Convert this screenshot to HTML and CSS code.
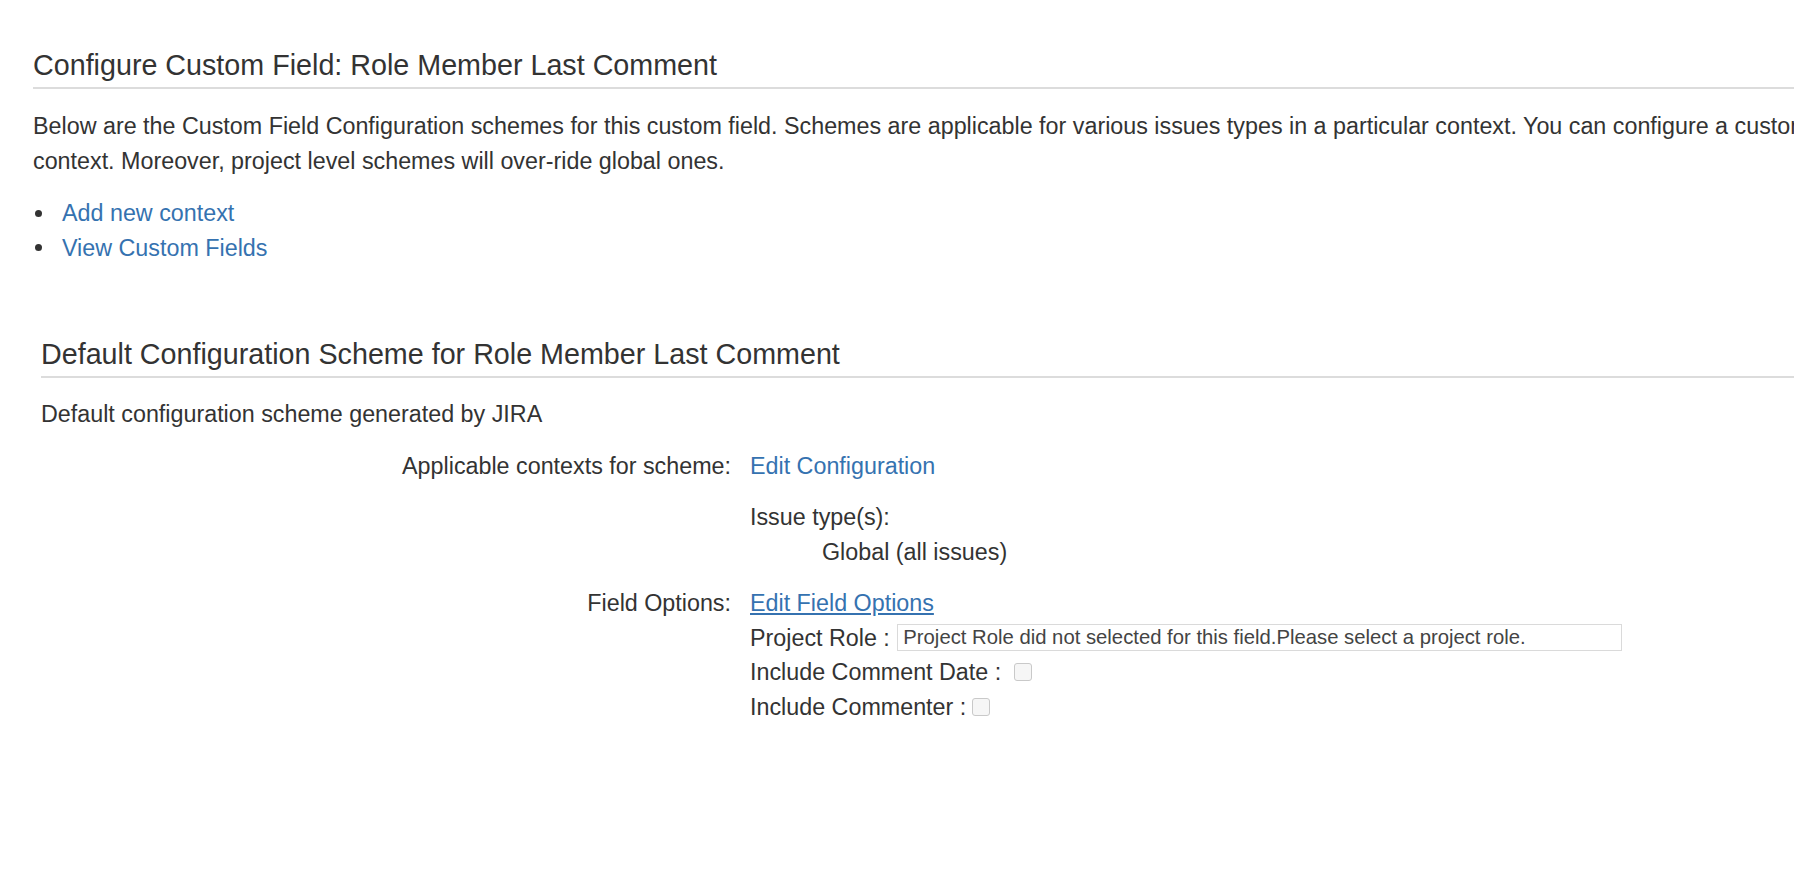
FILE: index.html
```html
<!DOCTYPE html>
<html lang="en">
<head>
<meta charset="utf-8" />
<link rel="stylesheet" href="styles.css">
</head>
<body>
  <div class="page">
    <h1 class="title">Configure Custom Field: Role Member Last Comment</h1>
    <p class="intro">Below are the Custom Field Configuration schemes for this custom field. Schemes are applicable for various issues types in a particular context. You can configure a custom field differently for each<br>context. Moreover, project level schemes will over-ride global ones.</p>
    <ul class="actions">
      <li><a href="#">Add new context</a></li>
      <li><a href="#">View Custom Fields</a></li>
    </ul>

    <div class="scheme">
      <h2 class="title">Default Configuration Scheme for Role Member Last Comment</h2>
      <p class="scheme-desc">Default configuration scheme generated by JIRA</p>

      <div class="props">
        <div class="prop-label">Applicable contexts for scheme:</div>
        <div class="prop-value">
          <a href="#">Edit Configuration</a>
          <div class="context">
            <div>Issue type(s):</div>
            <div class="context-item">Global (all issues)</div>
          </div>
        </div>

        <div class="prop-label">Field Options:</div>
        <div class="prop-value">
          <a href="#" class="underlined">Edit Field Options</a>
          <div class="option">Project Role : <input type="text" class="role-input" value="Project Role did not selected for this field.Please select a project role." readonly></div>
          <div class="option">Include Comment Date : <input type="checkbox" class="check"></div>
          <div class="option">Include Commenter :<input type="checkbox" class="check"></div>
        </div>
      </div>
    </div>
  </div>
</body>
</html>
```
FILE: styles.css
```css
html{
  overflow:hidden;
  background:#fff;
}
body{
  margin:0;
  font-family:"Liberation Sans", Arial, sans-serif;
  font-size:23.3px;
  line-height:34.5px;
  color:#333;
}
a{
  color:#3572b0;
  text-decoration:none;
}
a.underlined{
  text-decoration:underline;
}
.page{
  width:2400px;
  padding-left:33px;
  padding-top:48px;
}
.title{
  margin:0;
  font-size:28.7px;
  font-weight:normal;
  line-height:34px;
  padding-bottom:5px;
  border-bottom:2px solid #dcdcdc;
}
.intro{
  margin:20px 0 0 0;
  white-space:nowrap;
  line-height:35px;
}
.actions{
  margin:17px 0 0 0;
  padding-left:2px;
  list-style:none;
}
.actions li{
  display:flex;
  align-items:center;
}
.actions li::before{
  content:"";
  width:7px;
  height:7px;
  border-radius:50%;
  background:#333;
  margin-right:20px;
}
.scheme{
  margin-left:8px;
  margin-top:72px;
}
.scheme-desc{
  margin:19px 0 0 0;
}
.props{
  display:grid;
  grid-template-columns:690px 1fr;
  column-gap:19px;
  margin-top:17px;
}
.prop-label{
  text-align:right;
  margin-bottom:17px;
}
.prop-value{
  margin-bottom:17px;
}
.context{
  margin-top:17px;
}
.context-item{
  padding-left:72px;
}
.option{
  display:flex;
  align-items:center;
  white-space:pre;
}
.role-input{
  width:725px;
  height:27px;
  box-sizing:border-box;
  margin:0 0 0 1px;
  padding:0 5px;
  border:1px solid #dadada;
  font-family:"Liberation Sans", Arial, sans-serif;
  font-size:20.3px;
  color:#444;
  outline:none;
}
.check{
  -webkit-appearance:none;
  appearance:none;
  width:18px;
  height:18px;
  margin:0 0 0 6px;
  border:1px solid #c9c9c9;
  border-radius:3px;
  background:#f6f6f6;
}
```
